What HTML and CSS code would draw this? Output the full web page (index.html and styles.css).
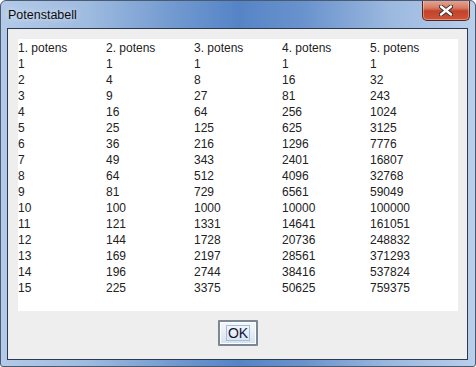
FILE: index.html
```html
<!DOCTYPE html>
<html lang="no">
<head>
  <meta charset="UTF-8" />
  <title>Potenstabell</title>
  <link rel="stylesheet" href="styles.css">
</head>
<body>
  <div class="window">
    <div class="titlebar">
      <span class="title">Potenstabell</span>
      <button class="close" aria-label="Lukk">
        <svg width="14" height="11" viewBox="0 0 14 11">
          <path d="M2 1.5 L12 9.5 M12 1.5 L2 9.5" stroke="#3a2a2a" stroke-width="4.2" stroke-linecap="round"/>
          <path d="M2 1.5 L12 9.5 M12 1.5 L2 9.5" stroke="#ffffff" stroke-width="2.4" stroke-linecap="round"/>
        </svg>
      </button>
    </div>

    <div class="client">
      <div class="table" id="table"></div>
      <div class="actions">
        <button class="ok"><span class="focus">OK</span></button>
      </div>
    </div>
  </div>

  <script>
    // Build the power table
    const table = document.getElementById("table");
    for (let p = 1; p <= 5; p++) {
      const cell = document.createElement("span");
      cell.textContent = p + ". potens";
      table.appendChild(cell);
    }
    for (let n = 1; n <= 15; n++) {
      for (let p = 1; p <= 5; p++) {
        const cell = document.createElement("span");
        cell.textContent = Math.pow(n, p);
        table.appendChild(cell);
      }
    }
  </script>
</body>
</html>
```

FILE: styles.css
```css
body {
  margin: 0;
  background: #fff;
  font-family: 'Liberation Sans', Arial, sans-serif;
}

.window {
  width: 476px;
  height: 367px;
  box-sizing: border-box;
  border: 1px solid #4a5a70;
  border-radius: 6px 6px 3px 3px;
  background: linear-gradient(to right, #b3cae8 0%, #9fbbe0 18%, #6e97cf 38%, #5584c6 50%, #6a93cd 64%, #9bb8df 82%, #b9cfeb 100%);
  display: flex;
  flex-direction: column;
  overflow: hidden;
}

.titlebar {
  height: 28px;
  display: flex;
  align-items: flex-start;
}

.title {
  margin: 7px 0 0 7px;
  font-size: 12.5px;
  color: #0c0c0c;
  text-shadow: 0 0 6px rgba(255,255,255,0.8);
}

.close {
  margin-left: auto;
  margin-right: 5px;
  margin-top: -1px;
  width: 48px;
  height: 21px;
  padding: 0;
  border: 1px solid #5a2418;
  border-top: none;
  border-radius: 0 0 5px 5px;
  background: linear-gradient(#e8a897 0%, #d67a63 40%, #c2432b 55%, #cd5438 100%);
  box-shadow: inset 0 0 0 1px rgba(255,255,255,0.35);
  display: flex;
  align-items: center;
  justify-content: center;
}

.client {
  margin: 0 7px 6px 6px;
  border: 1px solid #2b3a4e;
  background: #eeeeee;
  height: 329px;
  padding: 10px 9px 0 10px;
  box-sizing: content-box;
  display: flex;
  flex-direction: column;
}

.table {
  background: #fff;
  height: 256px;
  padding: 1px 0 15px 0;
  display: grid;
  grid-template-columns: repeat(5, 88px);
  grid-auto-rows: 16px;
  font-size: 12px;
  line-height: 16px;
  color: #222;
}

.actions {
  display: flex;
  justify-content: center;
  padding-top: 9px;
}

.ok {
  width: 40px;
  height: 26px;
  padding: 0;
  border: 2px solid #7b8794;
  border-radius: 1px;
  background: linear-gradient(#f4f7fb 0%, #e6eef7 50%, #d3e1f0 100%);
  box-shadow: inset 0 0 0 1px #ffffff;
  font-family: 'Liberation Sans', Arial, sans-serif;
  font-size: 14px;
  color: #14143a;
  display: flex;
  align-items: center;
  justify-content: center;
}

.focus {
  border: 1px solid #a9bfd9;
  padding: 0 1px;
  line-height: 14px;
}
```
